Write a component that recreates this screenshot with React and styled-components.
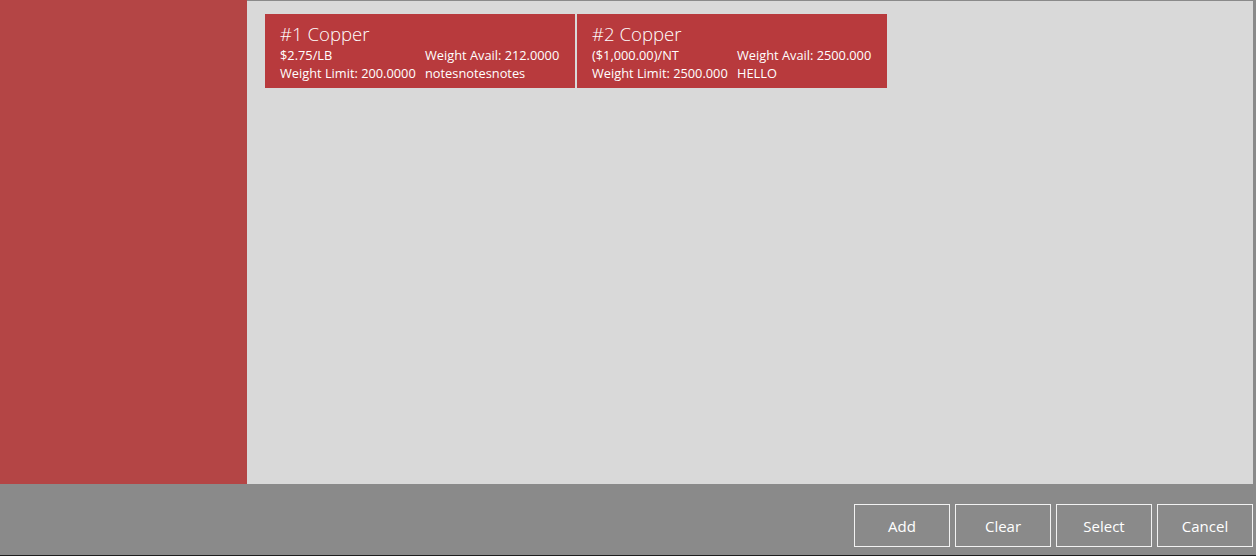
import React from "react";
import styled, { createGlobalStyle } from "styled-components";

const GlobalStyle = createGlobalStyle`
  html, body {
    margin: 0;
    padding: 0;
    background: #8a8a8a;
  }
  body {
    font-family: "Segoe UI", "Open Sans", "Noto Sans", sans-serif;
  }
`;

const Window = styled.div`
  width: 1256px;
  height: 556px;
  display: flex;
  flex-direction: column;
  background: #8a8a8a;
  border-bottom: 1px solid #1e1e1e;
  box-sizing: border-box;
`;

const Body = styled.div`
  flex: 1;
  display: flex;
  min-height: 0;
`;

const Sidebar = styled.div`
  width: 247px;
  background: #b44545;
`;

const Content = styled.div`
  flex: 1;
  background: #d9d9d9;
  border-top: 1px solid #8a8a8a;
  border-right: 3px solid #8a8a8a;
  padding: 13px 18px;
  display: flex;
  align-items: flex-start;
  gap: 2px;
`;

const Card = styled.div`
  width: 310px;
  height: 74px;
  box-sizing: border-box;
  background: #b83a3d;
  color: #fff;
  padding: 7px 15px 0;
`;

const Title = styled.div`
  font-size: 18.6px;
  font-weight: 300;
  line-height: 25px;
`;

const Grid = styled.div`
  display: grid;
  grid-template-columns: 145px 1fr;
  font-size: 12.8px;
  line-height: 18px;
  white-space: nowrap;
`;

const Footer = styled.div`
  height: 71px;
  display: flex;
  justify-content: flex-end;
  align-items: flex-start;
  gap: 5px;
  padding: 20px 3px 0 0;
  box-sizing: border-box;
`;

const Button = styled.button`
  width: 96px;
  height: 43px;
  background: transparent;
  border: 1px solid #f2f2f2;
  color: #fff;
  font-family: inherit;
  font-size: 15px;
  padding: 0;
  cursor: pointer;
`;

const items = [
  {
    title: "#1 Copper",
    price: "$2.75/LB",
    avail: "Weight Avail: 212.0000",
    limit: "Weight Limit: 200.0000",
    notes: "notesnotesnotes",
  },
  {
    title: "#2 Copper",
    price: "($1,000.00)/NT",
    avail: "Weight Avail: 2500.000",
    limit: "Weight Limit: 2500.000",
    notes: "HELLO",
  },
];

export default function App() {
  return (
    <>
      <GlobalStyle />
      <Window>
        <Body>
          <Sidebar />
          <Content>
            {items.map((it) => (
              <Card key={it.title}>
                <Title>{it.title}</Title>
                <Grid>
                  <span>{it.price}</span>
                  <span>{it.avail}</span>
                  <span>{it.limit}</span>
                  <span>{it.notes}</span>
                </Grid>
              </Card>
            ))}
          </Content>
        </Body>
        <Footer>
          <Button>Add</Button>
          <Button>Clear</Button>
          <Button>Select</Button>
          <Button>Cancel</Button>
        </Footer>
      </Window>
    </>
  );
}
